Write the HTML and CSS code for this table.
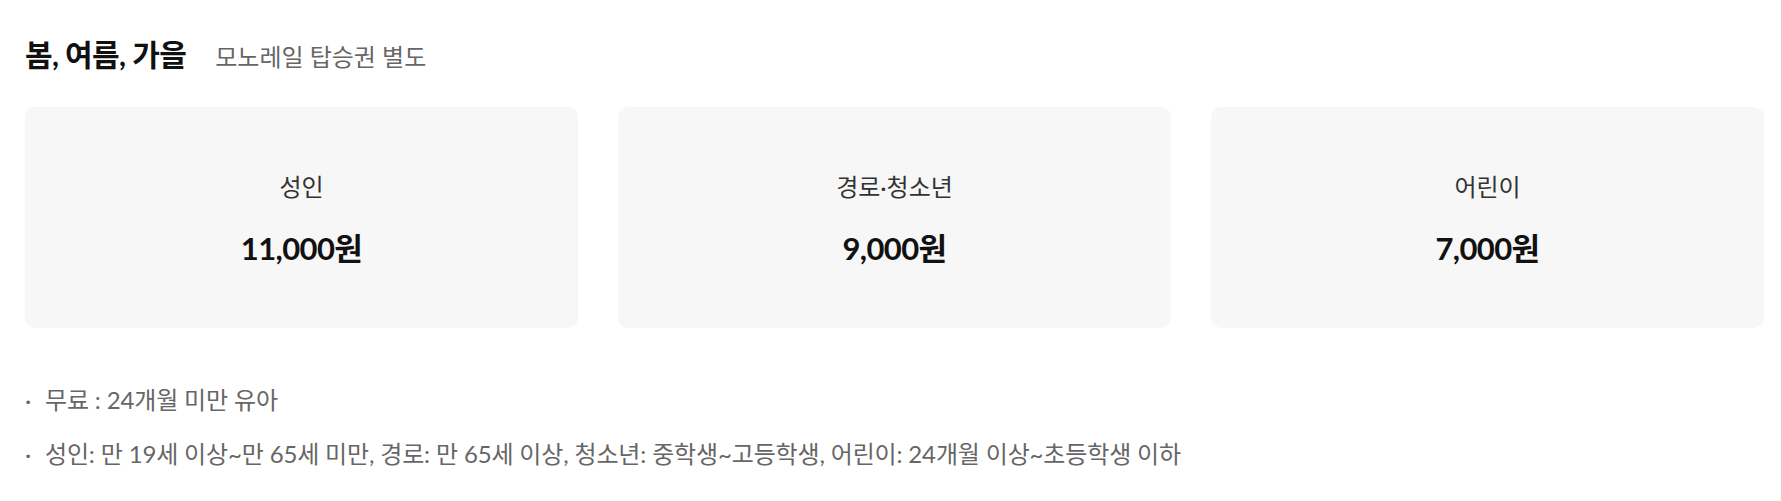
FILE: index.html
```html
<!DOCTYPE html>
<html lang="ko">
<head>
  <meta charset="UTF-8" />
  <title>이용요금</title>
  <link rel="stylesheet" href="styles.css">
</head>
<body>
  <div class="price-section">
    <div class="section-head">
      <h3>봄, 여름, 가을</h3>
      <p>모노레일 탑승권 별도</p>
    </div>

    <ul class="price-cards">
      <li class="card">
        <span class="label">성인</span>
        <strong class="price">11,000원</strong>
      </li>
      <li class="card">
        <span class="label">경로·청소년</span>
        <strong class="price">9,000원</strong>
      </li>
      <li class="card">
        <span class="label">어린이</span>
        <strong class="price">7,000원</strong>
      </li>
    </ul>

    <ul class="notes">
      <li>무료 : 24개월 미만 유아</li>
      <li>성인: 만 19세 이상~만 65세 미만, 경로: 만 65세 이상, 청소년: 중학생~고등학생, 어린이: 24개월 이상~초등학생 이하</li>
    </ul>
  </div>
</body>
</html>
```

FILE: styles.css
```css
/* 공용 */
* {
  box-sizing: border-box;
  margin: 0;
  padding: 0;
}
body {
  font-family: Lato, "Noto Sans CJK KR", sans-serif;
  background: #fff;
  color: #111;
}
ul {
  list-style: none;
}

.price-section {
  padding: 34px 17px 0 25px;
}

/* 제목 */
.section-head {
  display: flex;
  align-items: baseline;
  gap: 29px;
  line-height: 40px;
}
.section-head h3 {
  font-size: 30px;
  font-weight: 700;
  letter-spacing: -0.6px;
  color: #111;
}
.section-head p {
  font-size: 24px;
  color: #666;
}

/* 요금 카드 */
.price-cards {
  display: grid;
  grid-template-columns: repeat(3, 1fr);
  gap: 40px;
  margin-top: 30px;
}
.card {
  height: 221px;
  padding-top: 4px;
  background-color: #f7f7f7;
  border-radius: 10px;
  display: flex;
  flex-direction: column;
  align-items: center;
  justify-content: center;
  gap: 27px;
}
.card .label {
  font-size: 24px;
  line-height: 30px;
  color: #333;
}
.card .price {
  font-size: 31px;
  line-height: 38px;
  font-weight: 700;
  color: #111;
  letter-spacing: -0.6px;
}

/* 안내 */
.notes {
  margin-top: 57px;
  display: flex;
  flex-direction: column;
  gap: 24px;
}
.notes li {
  position: relative;
  padding-left: 20px;
  font-size: 24px;
  line-height: 30px;
  letter-spacing: -0.15px;
  color: #666;
}
.notes li::before {
  content: "·";
  position: absolute;
  left: 0;
  top: 0;
  color: #666;
}
```
